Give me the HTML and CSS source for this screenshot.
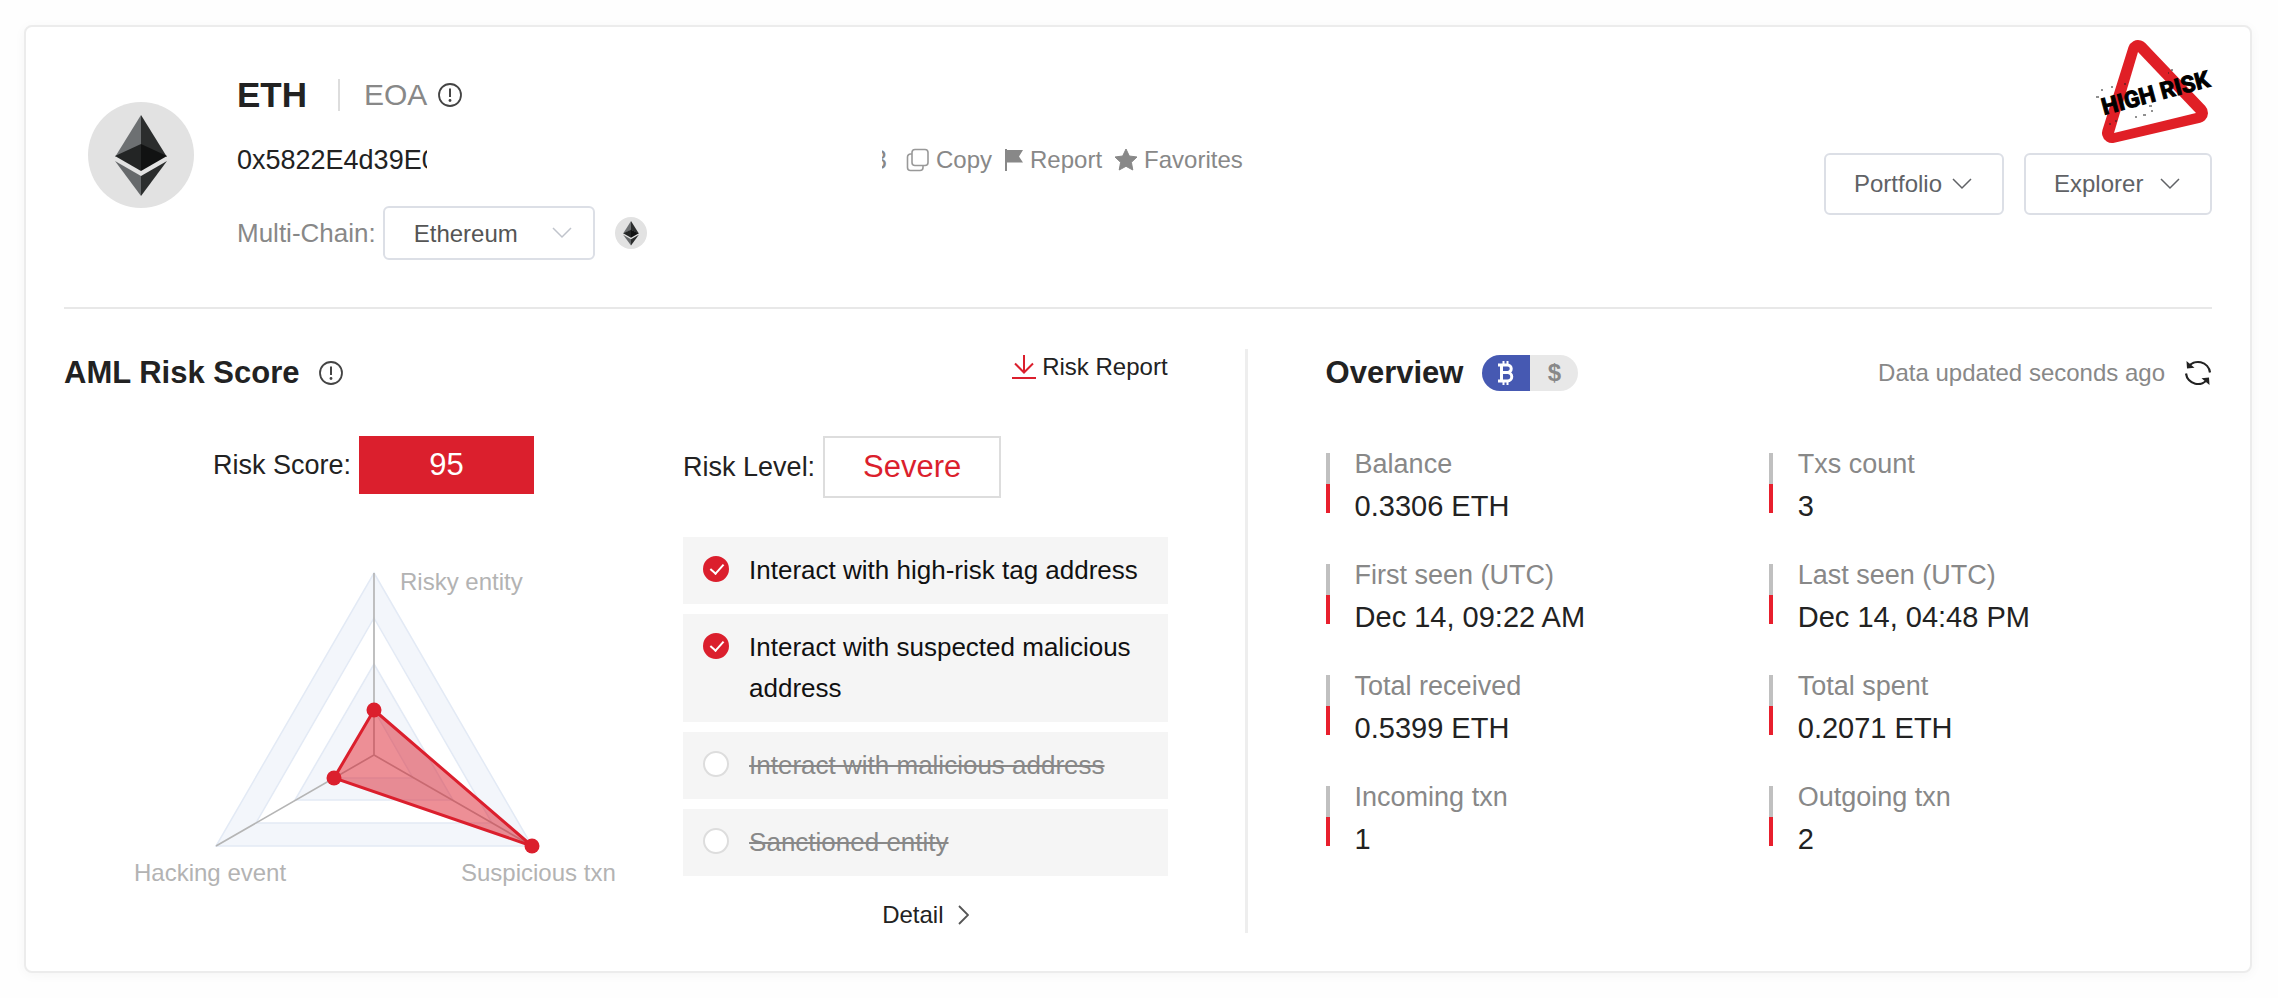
FILE: index.html
```html
<!DOCTYPE html>
<html lang="en">
  <head>
    <meta charset="UTF-8" />
    <meta name="viewport" content="width=device-width, initial-scale=1.0" />
    <title>AML Risk Score</title>
    <link rel="stylesheet" href="styles.css">
  </head>
  <body>
    <!-- shared icons -->
    <svg class="sprite" aria-hidden="true">
      <symbol id="eth" viewBox="0 0 106 106">
        <circle cx="53" cy="53" r="53" fill="#e2e2e2" />
        <path d="M53 13L27 55l26-12z" fill="#6d7072" />
        <path d="M53 13l26 42-26-12z" fill="#2b2d2d" />
        <path d="M27 54l26-12v27z" fill="#232525" />
        <path d="M79 54L53 42v27z" fill="#111212" />
        <path d="M27 59l26 15v20z" fill="#66696b" />
        <path d="M79 59L53 74v20z" fill="#2b2d2d" />
      </symbol>
      <symbol id="info" viewBox="0 0 24 24">
        <circle cx="12" cy="12" r="11" fill="none" stroke="#444" stroke-width="1.8" />
        <path d="M12 5.500v8.500" stroke="#444" stroke-width="2" />
        <circle cx="12" cy="17.500" r="1.400" fill="#444" />
      </symbol>
      <symbol id="down" viewBox="0 0 20 20">
        <path d="M1 5l9 9 9-9" fill="none" stroke="currentColor" stroke-width="1.500" />
      </symbol>
    </svg>

    <div class="card">
      <svg class="stamp" viewBox="0 0 124 116" role="img" aria-label="High risk">
        <path d="M47 20l60 63-86 20z" fill="#fff" stroke="#e01f26" stroke-width="20" stroke-linejoin="round" />
        <path d="M47 22l58 61-82 20z" fill="#fff" />
        <text class="stamp-text" transform="translate(13 85) rotate(-15)">HIGH RISK</text>
        <!-- ink specks -->
        <path d="M5 67h3M10 60h2M20 57h2M33 54h2M44 87h2M52 85h3M58 76h3M60 81h2M24 91h2M18 94h2M80 40h2M77 43h1" stroke="#222" />
      </svg>

      <div class="header">
        <svg class="logo"><use href="#eth" /></svg>
        <div class="info">
          <div class="title">
            <h1>ETH</h1>
            <span class="type">EOA</span>
            <svg class="icon-info"><use href="#info" /></svg>
          </div>
          <div class="address">
            <div class="hash">
              <span class="hash-start">0x5822E4d39E0</span>
              <span class="hash-end">3</span>
            </div>
            <button class="action">
              <svg width="24" height="24" viewBox="0 0 24 24" fill="none" stroke="#999" stroke-width="1.600">
                <rect x="6" y="1.500" width="16" height="16" rx="3" />
                <path d="M6 6H4.500a3 3 0 0 0-3 3v10.500a3 3 0 0 0 3 3H14a3 3 0 0 0 3-3v-2" />
              </svg>
              Copy
            </button>
            <button class="action">
              <svg width="20" height="24" viewBox="0 0 20 24" fill="#888">
                <path d="M1 1h2v22H1zM3 2h16l-4 6.500 4 6H3z" />
              </svg>
              Report
            </button>
            <button class="action">
              <svg width="24" height="24" viewBox="0 0 24 24" fill="#888">
                <path d="M12 1l3.300 7 7.700 1-5.600 5.300 1.400 7.700L12 18.300 5.200 22l1.400-7.700L1 9l7.700-1z" stroke="#888" stroke-linejoin="round" />
              </svg>
              Favorites
            </button>
          </div>
          <div class="chain">
            <label for="chain">Multi-Chain:</label>
            <div class="select">
              <select id="chain">
                <option>Ethereum</option>
              </select>
              <svg class="arrow"><use href="#down" /></svg>
            </div>
            <svg class="logo-small"><use href="#eth" /></svg>
          </div>
        </div>
        <div class="menus">
          <button class="menu">Portfolio <svg class="arrow"><use href="#down" /></svg></button>
          <button class="menu menu-wide">Explorer <svg class="arrow"><use href="#down" /></svg></button>
        </div>
      </div>

      <div class="main">
        <section class="risk">
          <div class="head">
            <h2>AML Risk Score</h2>
            <svg class="icon-info"><use href="#info" /></svg>
            <a class="report" href="#">
              <svg width="24" height="26" viewBox="0 0 24 26" fill="none" stroke="#db1f2d" stroke-width="2">
                <path d="M12 1v17M3 9.500l9 9 9-9M0 24h24" />
              </svg>
              Risk Report
            </a>
          </div>

          <div class="risk-cols">
            <div class="score">
              <div class="result result-center">
                <span>Risk Score:</span>
                <strong class="score-value">95</strong>
              </div>
              <svg class="radar" viewBox="0 0 500 325">
                <g stroke="#e3eaf5" stroke-width="1.500">
                  <path d="M250 8l158 273H92z" fill="#f3f6fb" />
                  <path d="M250 53l118 205H132z" fill="#fff" />
                  <path d="M250 99l79 136H171z" fill="#f3f6fb" />
                  <path d="M250 145l39 68h-78z" fill="#fff" />
                </g>
                <path d="M250 8v182L92 281M250 190l158 91" fill="none" stroke="#b5b5b5" stroke-width="1.700" />
                <path d="M250 145l158 136-198-68z" fill="#db1f2d" fill-opacity=".5" stroke="#db1f2d" stroke-width="3" />
                <g fill="#db1f2d">
                  <circle cx="250" cy="145" r="7.500" />
                  <circle cx="408" cy="281" r="7.500" />
                  <circle cx="210" cy="213" r="7.500" />
                </g>
                <g class="radar-label">
                  <text x="276" y="25">Risky entity</text>
                  <text x="10" y="316">Hacking event</text>
                  <text x="337" y="316">Suspicious txn</text>
                </g>
              </svg>
            </div>

            <div class="level">
              <div class="result">
                <span>Risk Level:</span>
                <strong class="level-value">Severe</strong>
              </div>
              <ul class="checks">
                <li><label class="check"><input type="checkbox" checked disabled /><span>Interact with high-risk tag address</span></label></li>
                <li><label class="check"><input type="checkbox" checked disabled /><span>Interact with suspected malicious address</span></label></li>
                <li><label class="check off"><input type="checkbox" disabled /><span>Interact with malicious address</span></label></li>
                <li><label class="check off"><input type="checkbox" disabled /><span>Sanctioned entity</span></label></li>
              </ul>
              <a class="detail" href="#">
                Detail
                <svg width="11" height="20" viewBox="0 0 11 20" fill="none" stroke="#555" stroke-width="1.800">
                  <path d="M1 1l9 9-9 9" />
                </svg>
              </a>
            </div>
          </div>
        </section>

        <section class="overview">
          <div class="head">
            <h2>Overview</h2>
            <div class="unit">
              <button class="unit-btn active" aria-label="Coin">
                <svg width="18" height="24" viewBox="0 0 18 24" fill="none" stroke="#fff" stroke-width="3">
                  <path d="M1 4h9.500a3.700 3.700 0 0 1 0 7.500H4M10.500 11.500a4.200 4.200 0 0 1 0 8.500H1M4.500 4v16" />
                  <path d="M6.500 0v4M10.500 0v4M6.500 20v4M10.500 20v4" stroke-width="2" />
                </svg>
              </button>
              <button class="unit-btn">$</button>
            </div>
            <span class="updated">Data updated seconds ago</span>
            <button class="refresh" aria-label="Refresh">
              <svg width="28" height="28" viewBox="0 0 28 28" fill="none" stroke="#222" stroke-width="2.200">
                <path d="M4 8.500A12 12 0 0 1 26 13.500M24 19.500A12 12 0 0 1 2 14.500" />
                <path d="M2.500 2l.5 7.500 7.500-.7zM25.500 26l-.5-7.500-7.500.7z" fill="#222" stroke="none" />
              </svg>
            </button>
          </div>
          <dl class="stats">
            <div class="stat"><dt>Balance</dt><dd>0.3306 ETH</dd></div>
            <div class="stat"><dt>Txs count</dt><dd>3</dd></div>
            <div class="stat"><dt>First seen (UTC)</dt><dd>Dec 14, 09:22 AM</dd></div>
            <div class="stat"><dt>Last seen (UTC)</dt><dd>Dec 14, 04:48 PM</dd></div>
            <div class="stat"><dt>Total received</dt><dd>0.5399 ETH</dd></div>
            <div class="stat"><dt>Total spent</dt><dd>0.2071 ETH</dd></div>
            <div class="stat"><dt>Incoming txn</dt><dd>1</dd></div>
            <div class="stat"><dt>Outgoing txn</dt><dd>2</dd></div>
          </dl>
        </section>
      </div>
    </div>
  </body>
</html>
```
FILE: styles.css
```css
* {
  margin: 0;
  padding: 0;
  box-sizing: border-box;
}

body {
  padding: 25px 26px 25px 24px;
  background: #fefefe;
  color: #222;
  font-family: "Liberation Sans", Arial, sans-serif;
  font-size: 24px;
}
button,
select {
  border: 0;
  background: none;
  color: inherit;
  font: inherit;
  cursor: pointer;
}
a {
  color: inherit;
  text-decoration: none;
}
svg {
  display: block;
  flex-shrink: 0;
}
.sprite {
  position: absolute;
  width: 0;
  height: 0;
}

.card {
  position: relative;
  padding: 0 38px 38px;
  border: 2px solid #ececec;
  border-radius: 8px;
  background: #fff;
  box-shadow: 0 2px 12px rgba(0, 0, 0, 0.04);
}
.stamp {
  position: absolute;
  top: 3px;
  right: 35px;
  width: 124px;
  height: 116px;
  overflow: visible;
}
.stamp-text {
  font-family: Roboto, "Liberation Sans", sans-serif;
  font-size: 23px;
  font-weight: bold;
  fill: #000;
  stroke: #000;
}

/* header */
.header {
  display: flex;
  align-items: flex-start;
  padding: 45px 0 47px 24px;
  border-bottom: 2px solid #e8e8e8;
}
.logo {
  width: 106px;
  height: 106px;
  margin: 30px 43px 0 0;
}
.title {
  display: flex;
  align-items: center;
  height: 46px;
}
.title h1 {
  margin-right: 31px;
  font-size: 35px;
}
.type {
  margin-right: 11px;
  padding-left: 24px;
  border-left: 2px solid #ddd;
  color: #888;
  font-size: 30px;
  line-height: 32px;
}
.icon-info {
  width: 24px;
  height: 24px;
}
.address {
  display: flex;
  align-items: center;
  gap: 12px;
  height: 40px;
  margin-top: 22px;
}
.hash {
  display: flex;
  justify-content: space-between;
  width: 650px;
  margin-right: 7px;
  font-size: 27px;
}
.hash-start {
  width: 190px;
  overflow: hidden;
}
.hash-end {
  display: flex;
  justify-content: flex-end;
  width: 5px;
  overflow: hidden;
  color: #888;
}
.action {
  display: flex;
  align-items: center;
  gap: 6px;
  color: #888;
}
.chain {
  display: flex;
  align-items: center;
  margin-top: 26px;
  color: #888;
  font-size: 26px;
}
.select {
  display: grid;
  align-items: center;
  margin: 0 20px 0 7px;
  color: #c0c4cc;
}
.select select {
  grid-area: 1 / 1;
  width: 212px;
  height: 54px;
  padding-left: 29px;
  border: 2px solid #dcdfe6;
  border-radius: 6px;
  appearance: none;
  color: #555;
  font-size: 24px;
}
.select .arrow {
  grid-area: 1 / 1;
  justify-self: end;
  margin-right: 23px;
  pointer-events: none;
}
.arrow {
  width: 20px;
  height: 20px;
}
.logo-small {
  width: 32px;
  height: 32px;
}
.menus {
  display: flex;
  gap: 20px;
  margin: 81px 0 0 auto;
}
.menu {
  display: flex;
  align-items: center;
  justify-content: space-between;
  width: 180px;
  height: 62px;
  padding: 0 30px 0 28px;
  border: 2px solid #dcdfe6;
  border-radius: 6px;
  color: #606266;
}
.menu-wide {
  width: 188px;
}

/* main */
.main {
  display: grid;
  grid-template-columns: 27fr 22fr;
  margin-top: 40px;
}
.head {
  display: flex;
  align-items: center;
  height: 48px;
}
.head h2 {
  font-size: 31px;
}
.risk {
  padding-right: 77px;
  border-right: 3px solid #eee;
}
.risk .head .icon-info {
  margin-left: 20px;
}
.report {
  display: flex;
  align-self: flex-start;
  align-items: center;
  gap: 6px;
  height: 36px;
  margin-left: auto;
}
.risk-cols {
  display: grid;
  grid-template-columns: 23fr 18fr;
  margin-top: 39px;
}
.result {
  display: flex;
  align-items: center;
  gap: 8px;
  font-size: 27px;
}
.result-center {
  justify-content: center;
}
.result strong {
  display: flex;
  align-items: center;
  justify-content: center;
  font-size: 31px;
  font-weight: normal;
}
.score-value {
  width: 175px;
  height: 58px;
  background: #db1f2d;
  color: #fff;
}
.level-value {
  width: 178px;
  height: 62px;
  border: 2px solid #ddd;
  color: #db1f2d;
}
.radar {
  width: 500px;
  height: 325px;
  margin: 71px auto 0;
}
.radar-label {
  fill: #b3b3b3;
  font-size: 24px;
}
.checks {
  display: grid;
  gap: 10px;
  margin-top: 39px;
  list-style: none;
}
.check {
  display: flex;
  align-items: flex-start;
  gap: 20px;
  padding: 13px 20px;
  background: #f5f5f5;
  color: #111;
  font-size: 26px;
  line-height: 41px;
}
.check input {
  flex-shrink: 0;
  width: 26px;
  height: 26px;
  margin-top: 6px;
  border: 2px solid #ddd;
  border-radius: 50%;
  appearance: none;
  background: #fff;
}
.check input:checked {
  border-color: #db1f2d;
  background: #db1f2d;
}
.check input:checked::after {
  content: "";
  display: block;
  width: 6px;
  height: 11px;
  margin: 3px 0 0 8px;
  border: solid #fff;
  border-width: 0 2px 2px 0;
  transform: rotate(42deg);
}
.check.off {
  color: #888;
  text-decoration: line-through;
}
.detail {
  display: flex;
  align-items: center;
  justify-content: center;
  gap: 14px;
  height: 37px;
  margin-top: 20px;
}

/* overview */
.overview {
  padding-left: 78px;
}
.unit {
  display: flex;
  margin-left: 19px;
  border-radius: 18px;
  overflow: hidden;
}
.unit-btn {
  display: flex;
  align-items: center;
  justify-content: center;
  width: 48px;
  height: 36px;
  background: #e8e8e8;
  color: #888;
  font-weight: bold;
}
.unit-btn.active {
  background: #4659b2;
}
.updated {
  margin-left: auto;
  color: #888;
}
.refresh {
  margin-left: 19px;
}
.stats {
  display: grid;
  grid-template-columns: 1fr 1fr;
  row-gap: 27px;
  margin-top: 46px;
}
.stat {
  padding-left: 29px;
  background: linear-gradient(#c0c0c0 52%, #e81f2d 52%) 0 10px / 4px 60px no-repeat;
  line-height: 42px;
}
.stat dt {
  color: #888;
  font-size: 27px;
}
.stat dd {
  font-size: 29px;
}
```
